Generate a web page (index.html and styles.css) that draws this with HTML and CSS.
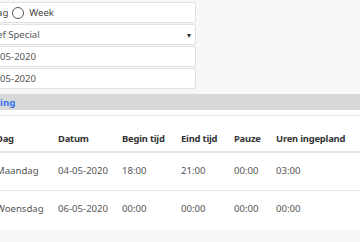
FILE: index.html
```html
<!DOCTYPE html>
<html>
<head>
<meta charset="utf-8">
<link rel="stylesheet" href="styles.css">
</head>
<body>
<div class="page">
  <div class="filters">
    <div class="field radio-row">
      <span class="radio"></span><span class="lbl">Dag</span>
      <span class="radio"></span><span class="lbl">Week</span>
    </div>
    <div class="field select">
      <span class="val">Chef Special</span>
      <span class="caret">&#9662;</span>
    </div>
    <div class="field date">04-05-2020</div>
    <div class="field date">10-05-2020</div>
  </div>
  <div class="band"><span class="band-title">Planning</span></div>
  <div class="card">
    <table class="plan">
      <colgroup>
        <col class="c1"><col class="c2"><col class="c3"><col class="c4"><col class="c5"><col class="c6">
      </colgroup>
      <thead>
        <tr><th>Dag</th><th>Datum</th><th>Begin tijd</th><th>Eind tijd</th><th>Pauze</th><th>Uren ingepland</th></tr>
      </thead>
      <tbody>
        <tr><td>Maandag</td><td>04-05-2020</td><td>18:00</td><td>21:00</td><td>00:00</td><td>03:00</td></tr>
        <tr><td>Woensdag</td><td>06-05-2020</td><td>00:00</td><td>00:00</td><td>00:00</td><td>00:00</td></tr>
      </tbody>
    </table>
  </div>
</div>
</body>
</html>
```

FILE: styles.css
```css
html, body {
  margin: 0;
  padding: 0;
  background: #f7f7f7;
  font-family: "Noto Sans", "Open Sans", sans-serif;
  font-size: 9.6px;
  color: #555;
  overflow: hidden;
}
.page {
  width: 400px;
}
.filters {
  padding-top: 2px;
  margin-left: -40px;
  width: 236px;
}
.field {
  box-sizing: border-box;
  height: 21px;
  margin-bottom: 1px;
  background: #fff;
  border: 1px solid #dfe2e5;
  border-radius: 2px;
  display: flex;
  align-items: center;
  line-height: 1;
}
.radio-row {
  padding-left: 12px;
  color: #444;
}
.radio {
  display: inline-block;
  box-sizing: border-box;
  width: 12px;
  height: 12px;
  border: 1px solid #555;
  border-radius: 50%;
  margin-right: 5px;
}
.lbl {
  margin-right: 4px;
}
.select {
  padding-left: 24px;
  padding-right: 4px;
  justify-content: space-between;
}
.caret {
  font-size: 8px;
  color: #333;
}
.date {
  padding-left: 25px;
}
.band {
  margin-top: 5px;
  height: 16px;
  background: #d8d8d8;
  display: flex;
  align-items: center;
  margin-left: -27px;
}
.band-title {
  color: #2f6ff0;
  font-weight: bold;
}
.card {
  padding-top: 5px;
  background: #fff;
  margin-left: -4px;
}
.plan {
  border-top: 1px solid #e6e6e6;
  border-collapse: collapse;
  table-layout: fixed;
  width: 404px;
}
.c1 { width: 62px; }
.c2 { width: 64px; }
.c3 { width: 59px; }
.c4 { width: 53px; }
.c5 { width: 42px; }
.plan th {
  text-align: left;
  color: #333;
  font-weight: bold;
  font-size: 9.4px;
  letter-spacing: -0.2px;
  height: 36px;
  padding: 10px 0 0 0;
  vertical-align: middle;
  box-sizing: border-box;
  border-bottom: 2px solid #e3e6ea;
  white-space: nowrap;
}
.plan td {
  text-align: left;
  padding: 11px 0 0 0;
  height: 39px;
  box-sizing: border-box;
  vertical-align: top;
  border-bottom: 1px solid #e8e8e8;
  white-space: nowrap;
}
.plan tbody tr:last-child td {
  border-bottom: none;
}
```
